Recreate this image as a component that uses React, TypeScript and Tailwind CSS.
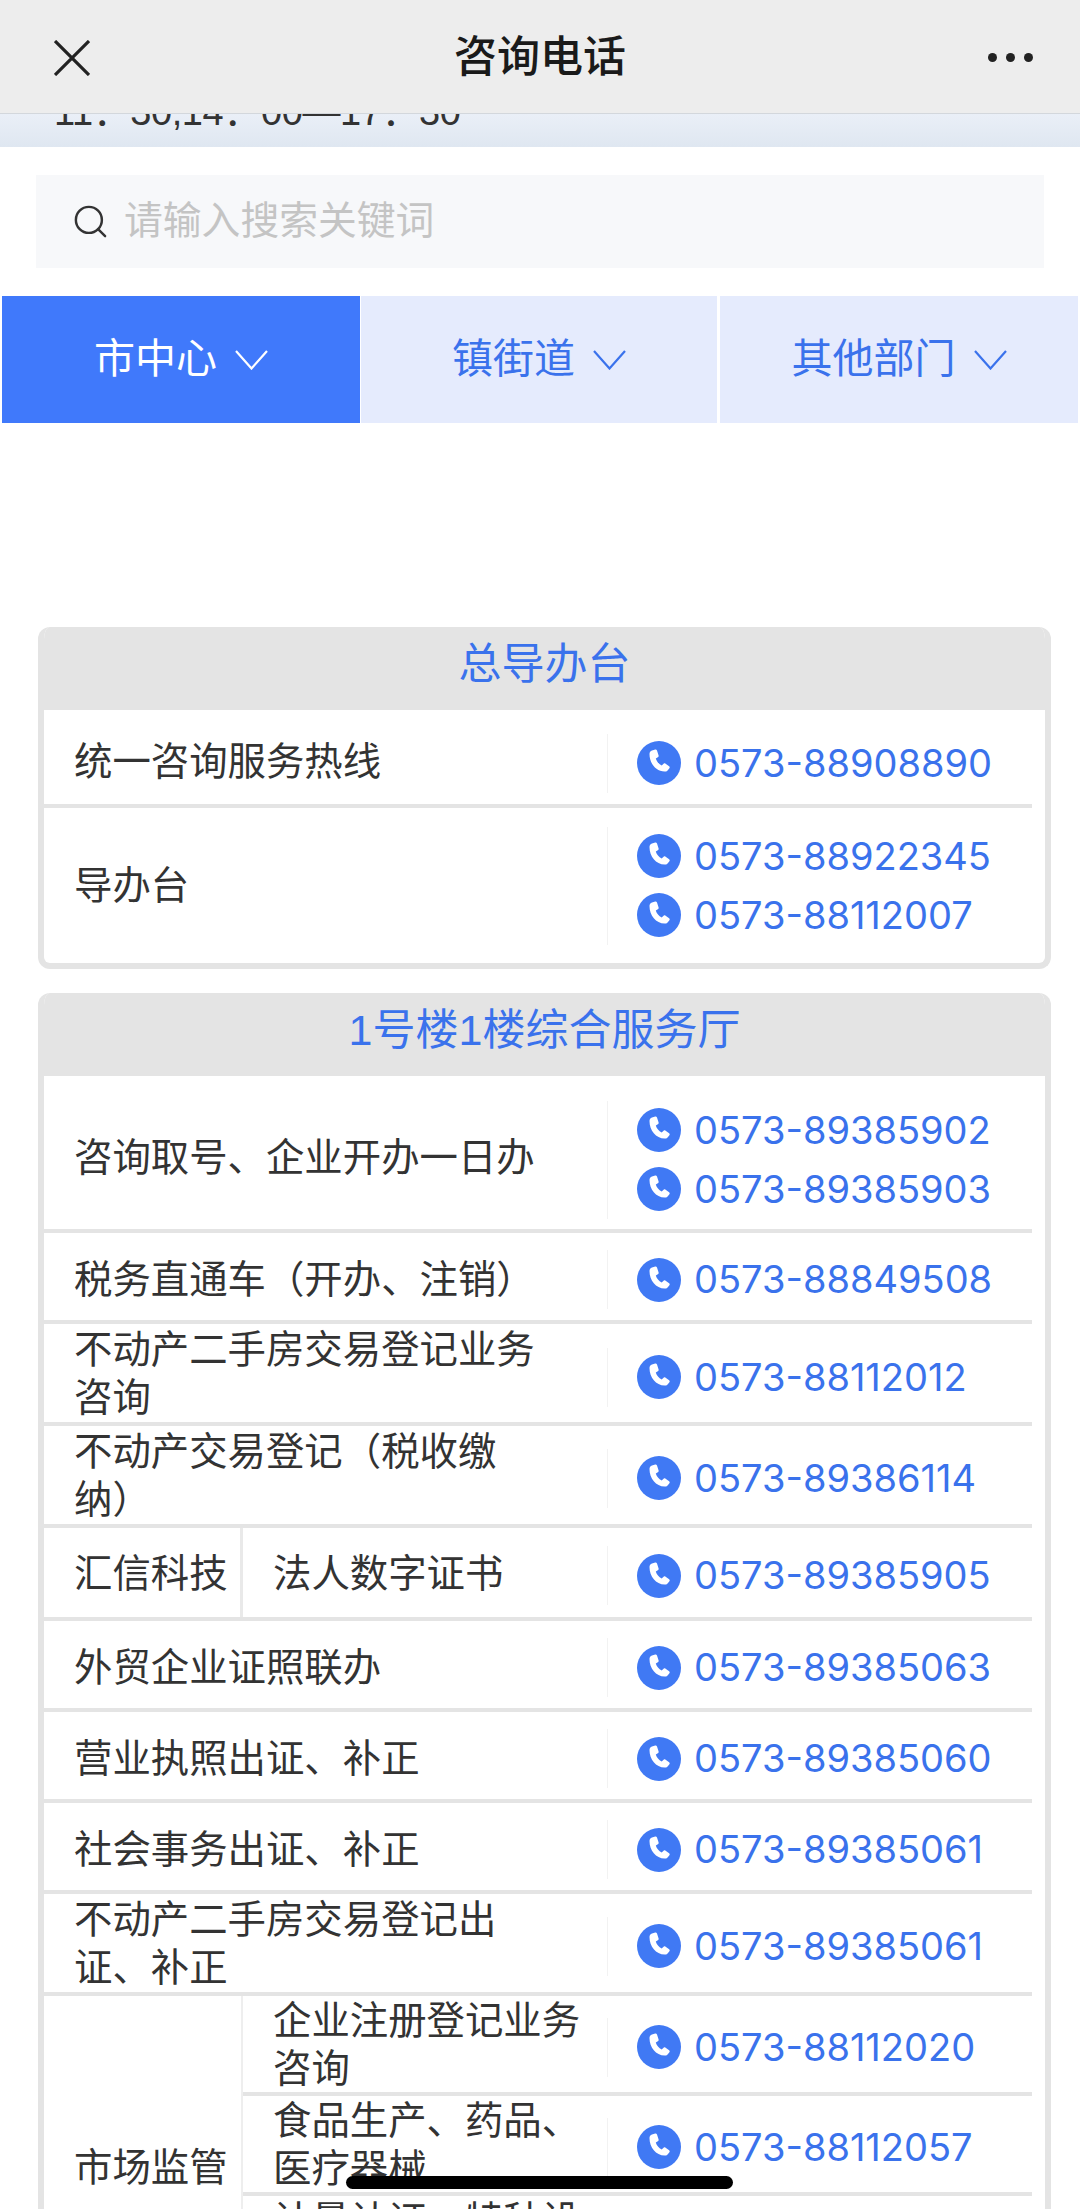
import { Search } from 'lucide-react'
import React from 'react'

function PhoneIcon() {
    return (
        <svg viewBox="0 0 44 44" className="h-[44px] w-[44px] shrink-0">
            <circle cx="22" cy="22" r="22" fill="#4079f4" />
            <path
                fill="#fff"
                d="M15 9.5l3.2-1c.8-.2 1.5.2 1.8 1l1.6 5c.2.8-.1 1.4-.8 1.8l-2 1.1c.9 3 3 5.6 5.9 7.1l1.6-1.6c.6-.6 1.3-.7 2-.3l3.8 2.6c.7.5.8 1.3.3 2l-1.6 2.1c-.8 1-1.9 1.5-3.2 1.2C19 30.5 12.5 22.5 12.5 13c0-1.6 1-3 2.5-3.5z"
            />
        </svg>
    )
}

function Chevron({ color }: { color: string }) {
    return (
        <svg viewBox="0 0 33 20" className="h-[20px] w-[33px]" fill="none">
            <path d="M1 1l15.5 17.5L32 1" stroke={color} strokeWidth="2.2" />
        </svg>
    )
}

function Phones({ numbers, className = '' }: { numbers: string[]; className?: string }) {
    return (
        <div className={`flex w-[425px] shrink-0 flex-col border-l border-[#f2f2f2] pl-[29px] ${className}`}>
            {numbers.map((n) => (
                <div key={n} className="flex h-[59px] items-center gap-[13px]">
                    <PhoneIcon />
                    <span className="font-['Inter',sans-serif] text-[38px] text-[#3a72ec]">{n}</span>
                </div>
            ))}
        </div>
    )
}

interface RowProps {
    label: string
    numbers: string[]
    height: string
    phoneClass?: string
    labelClass?: string
}

function Row({ label, numbers, height, phoneClass, labelClass = '' }: RowProps) {
    return (
        <div className={`flex items-center border-b-4 border-[#e4e4e4] ${height}`}>
            <div className={`w-[563px] shrink-0 pr-[63px] pl-[30px] leading-[48px] ${labelClass}`}>{label}</div>
            <Phones numbers={numbers} className={phoneClass} />
        </div>
    )
}

function NestedRow({ label, numbers, height }: { label: string; numbers: string[]; height: string }) {
    return (
        <div className={`flex items-center border-b-4 border-[#e4e4e4] ${height}`}>
            <div className="mt-[2px] w-[364px] shrink-0 pl-[30px] leading-[48px]">{label}</div>
            <Phones numbers={numbers} className="mt-[6px]" />
        </div>
    )
}

function Card({ title, children }: { title: string; children: React.ReactNode }) {
    return (
        <div className="ml-[38px] w-[1013px] overflow-hidden rounded-xl border-x-[6px] border-b-[6px] border-[#e4e4e4] bg-white">
            <div className="flex h-[83px] items-start justify-center bg-[#e4e4e4] pt-[11px] text-[43px] leading-[52px] text-[#3a72ec]">
                {title}
            </div>
            <div className="w-[988px]">{children}</div>
        </div>
    )
}

function Tab({ label, active, className }: { label: string; active?: boolean; className: string }) {
    return (
        <div
            className={`flex h-[127px] items-center justify-center gap-[18px] text-[41px] ${
                active ? 'bg-[#4079fb] text-white' : 'bg-[#e5ebfd] text-[#3a72ec]'
            } ${className}`}
        >
            {label}
            <Chevron color={active ? '#ffffff' : '#3a72ec'} />
        </div>
    )
}

export default function App() {
    return (
        <div className="relative h-[2209px] w-[1080px] overflow-hidden bg-white font-['Liberation_Sans','Noto_Sans_CJK_SC',sans-serif] text-[38.4px] text-[#333]">
            <div className="relative z-10 flex h-[114px] items-center justify-between border-b border-[#d3d7dc] bg-[#ededed] pt-[2px] pr-[47px] pl-[54px]">
                <svg viewBox="0 0 36 36" className="h-[36px] w-[36px]" fill="none">
                    <path d="M1 1l34 34M35 1L1 35" stroke="#222" strokeWidth="3.2" />
                </svg>
                <span className="absolute left-0 w-full text-center text-[43px] font-medium text-[#1a1a1a]">咨询电话</span>
                <div className="flex gap-[9px]">
                    <span className="h-[9px] w-[9px] rounded-full bg-[#222]" />
                    <span className="h-[9px] w-[9px] rounded-full bg-[#222]" />
                    <span className="h-[9px] w-[9px] rounded-full bg-[#222]" />
                </div>
            </div>
            <div className="h-[33px] overflow-hidden bg-gradient-to-b from-[#eaeff7] to-[#dfe7f1] pl-[54px]">
                <div className="-mt-[26px] text-[38px] leading-[48px] tracking-[-0.4px]">11：30,14：00—17：30</div>
            </div>

            <div className="mx-[36px] mt-[28px] flex h-[93px] w-[1008px] items-center gap-[14px] bg-[#f7f8fa] pl-[35px] text-[38.8px] text-[#c4c4c4]">
                <Search size={39} strokeWidth={1.5} className="text-[#333]" />
                <span>请输入搜索关键词</span>
            </div>

            <div className="mt-[28px] flex pl-[2px]">
                <Tab label="市中心" active className="w-[358px]" />
                <Tab label="镇街道" className="ml-[1px] w-[356px]" />
                <Tab label="其他部门" className="ml-[3px] w-[358px]" />
            </div>

            <div className="mt-[204px] flex flex-col gap-[24px]">
                <Card title="总导办台">
                    <Row label="统一咨询服务热线" numbers={['0573-88908890']} height="h-[98px]" phoneClass="mt-[12px]" labelClass="mt-[10px]" />
                    <div className="flex h-[155px] items-center">
                        <div className="w-[563px] shrink-0 pl-[30px]">导办台</div>
                        <Phones numbers={['0573-88922345', '0573-88112007']} />
                    </div>
                </Card>
                <Card title="1号楼1楼综合服务厅">
                    <Row label="咨询取号、企业开办一日办" numbers={['0573-89385902', '0573-89385903']} height="h-[157px]" phoneClass="mt-[14px]" labelClass="mt-[10px]" />
                    <Row label="税务直通车（开办、注销）" numbers={['0573-88849508']} height="h-[91px]" phoneClass="mt-[6px]" labelClass="mt-[6px]" />
                    <Row label="不动产二手房交易登记业务咨询" numbers={['0573-88112012']} height="h-[102px]" phoneClass="mt-[8px]" labelClass="mt-[2px]" />
                    <Row label="不动产交易登记（税收缴纳）" numbers={['0573-89386114']} height="h-[102px]" phoneClass="mt-[6px]" labelClass="mt-[2px]" />
                    <div className="flex h-[93px] border-b-4 border-[#e4e4e4]">
                        <div className="flex w-[199px] shrink-0 items-center border-r-[3px] border-[#e9e9e9] pt-[2px] pl-[30px]">汇信科技</div>
                        <div className="flex w-[364px] shrink-0 items-center pt-[2px] pl-[30px]">法人数字证书</div>
                        <div className="flex items-center">
                            <Phones numbers={['0573-89385905']} className="mt-[6px]" />
                        </div>
                    </div>
                    <Row label="外贸企业证照联办" numbers={['0573-89385063']} height="h-[91px]" phoneClass="mt-[6px]" labelClass="mt-[6px]" />
                    <Row label="营业执照出证、补正" numbers={['0573-89385060']} height="h-[91px]" phoneClass="mt-[6px]" labelClass="mt-[6px]" />
                    <Row label="社会事务出证、补正" numbers={['0573-89385061']} height="h-[91px]" phoneClass="mt-[6px]" labelClass="mt-[6px]" />
                    <Row label="不动产二手房交易登记出证、补正" numbers={['0573-89385061']} height="h-[102px]" phoneClass="mt-[6px]" labelClass="mt-[2px]" />
                    <div className="flex">
                        <div className="flex w-[199px] shrink-0 items-center border-r-[2px] border-[#eeeeee] pl-[30px]">市场监管</div>
                        <div>
                            <NestedRow label="企业注册登记业务咨询" numbers={['0573-88112020']} height="h-[100px]" />
                            <NestedRow label="食品生产、药品、医疗器械" numbers={['0573-88112057']} height="h-[100px]" />
                            <div className="h-[144px]">
                                <NestedRow label="计量认证、特种设备" numbers={['0573-88112058']} height="h-[100px]" />
                            </div>
                        </div>
                    </div>
                </Card>
            </div>

            {/* home indicator */}
            <div className="absolute top-[2176px] left-[346px] h-[13px] w-[387px] rounded-full bg-black" />
        </div>
    )
}
